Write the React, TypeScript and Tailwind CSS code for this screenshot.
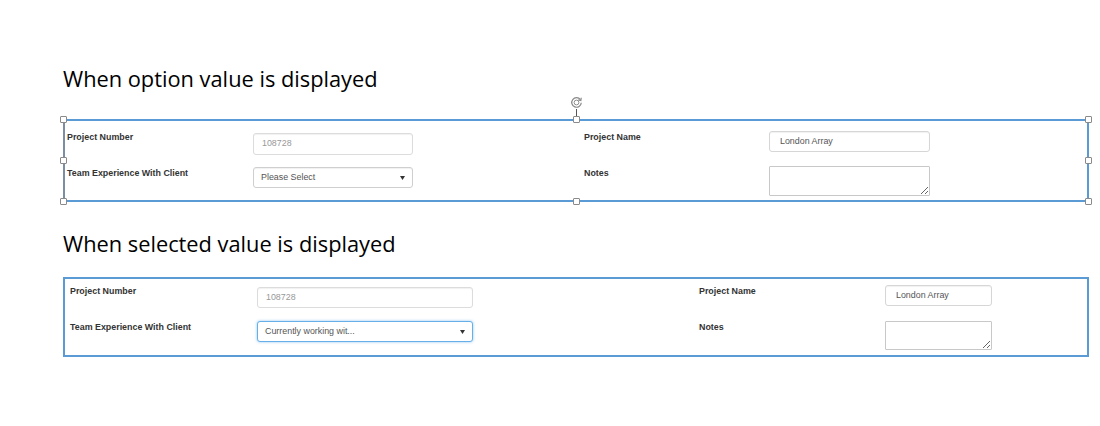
import React from "react";

const Handle = ({ className }: { className: string }) => (
  <div
    className={`absolute w-[7px] h-[7px] bg-white border border-[#8a8a8a] rounded-[1px] ${className}`}
  />
);

const Caret = () => (
  <svg width="5" height="4" viewBox="0 0 5 4" className="shrink-0">
    <path d="M0 0 L5 0 L2.5 4 Z" fill="#333" />
  </svg>
);

const labelCls =
  "text-[8.9px] leading-[12px] font-bold text-[#333] whitespace-nowrap";
const inputCls =
  "flex items-center border rounded-[3px] bg-white text-[8.9px] shadow-[inset_0_1px_1px_rgba(0,0,0,0.06)]";

export default function App() {
  return (
    <div
      className="w-[1100px] h-[426px] bg-white overflow-hidden"
      style={{ fontFamily: '"Liberation Sans", Arial, sans-serif' }}
    >
      <div className="pt-[64px] pl-[63px]">
        <h1
          className="text-[21.8px] leading-[30px] text-black"
          style={{ fontFamily: '"Open Sans", sans-serif' }}
        >
          When option value is displayed
        </h1>
      </div>

      {/* Box 1 */}
      <div className="relative ml-[63px] mt-[25px] w-[1026px] h-[83px] border-2 border-[#5b9bd5] border-l-[#7b8ea3] flex pl-[2px]">
        {/* rotate handle */}
        <div className="absolute left-[505px] -top-[25px] flex flex-col items-center">
          <svg width="13" height="13" viewBox="0 0 12 12">
            <path
              d="M9.6 3.4 A4.4 4.4 0 1 0 10.4 6.2"
              fill="none"
              stroke="#8a8a8a"
              strokeWidth="1.1"
            />
            <path d="M10.4 1.6 L10 4.2 L7.6 3.6" fill="none" stroke="#8a8a8a" strokeWidth="1.1" />
            <circle cx="6" cy="6" r="2.2" fill="none" stroke="#8a8a8a" strokeWidth="0.9" />
          </svg>
          <div className="w-px h-[9px] bg-[#555]" />
        </div>
        <Handle className="-left-[5px] -top-[5px]" />
        <Handle className="left-[508px] -top-[5px]" />
        <Handle className="-right-[5px] -top-[5px]" />
        <Handle className="-left-[5px] top-[36px]" />
        <Handle className="-right-[5px] top-[36px]" />
        <Handle className="-left-[5px] -bottom-[5px]" />
        <Handle className="left-[508px] -bottom-[5px]" />
        <Handle className="-right-[5px] -bottom-[5px]" />

        <div className="w-[186px] flex flex-col">
          <div className={`${labelCls} mt-[10px]`}>Project Number</div>
          <div className={`${labelCls} mt-[24px]`}>Team Experience With Client</div>
        </div>
        <div className="w-[160px] flex flex-col">
          <div className={`${inputCls} mt-[12px] h-[22px] border-[#dcdcdc] pl-[8px] text-[#999]`}>
            108728
          </div>
          <div className={`${inputCls} mt-[12px] h-[21px] border-[#cfcfcf] pl-[7px] pr-[7px] text-[#555] justify-between`}>
            <span>Please Select</span>
            <Caret />
          </div>
        </div>
        <div className="w-[171px]" />
        <div className="w-[185px] flex flex-col">
          <div className={`${labelCls} mt-[10px]`}>Project Name</div>
          <div className={`${labelCls} mt-[24px]`}>Notes</div>
        </div>
        <div className="w-[161px] flex flex-col">
          <div className={`${inputCls} mt-[10px] h-[21px] border-[#d6d6d6] pl-[10px] text-[#555]`}>
            London Array
          </div>
          <textarea
            readOnly
            className="mt-[14px] h-[30px] w-full border border-[#c8c8c8] bg-white rounded-[1px] resize-y block"
          />
        </div>
      </div>

      <div className="pt-[27px] pl-[63px]">
        <h1
          className="text-[21.8px] leading-[30px] text-black"
          style={{ fontFamily: '"Open Sans", sans-serif' }}
        >
          When selected value is displayed
        </h1>
      </div>

      {/* Box 2 */}
      <div className="ml-[63px] mt-[18px] w-[1026px] h-[80px] border-2 border-[#5b9bd5] flex pl-[5px]">
        <div className="w-[187px] flex flex-col">
          <div className={`${labelCls} mt-[6px]`}>Project Number</div>
          <div className={`${labelCls} mt-[24px]`}>Team Experience With Client</div>
        </div>
        <div className="w-[216px] flex flex-col">
          <div className={`${inputCls} mt-[8px] h-[21px] border-[#dcdcdc] pl-[8px] text-[#999]`}>
            108728
          </div>
          <div className="mt-[13px] h-[21px] flex items-center justify-between border border-[#66afe9] rounded-[3px] bg-white pl-[7px] pr-[7px] text-[8.9px] text-[#555] shadow-[0_0_3px_rgba(102,175,233,0.7)]">
            <span>Currently working wit...</span>
            <Caret />
          </div>
        </div>
        <div className="w-[226px]" />
        <div className="w-[186px] flex flex-col">
          <div className={`${labelCls} mt-[6px]`}>Project Name</div>
          <div className={`${labelCls} mt-[24px]`}>Notes</div>
        </div>
        <div className="w-[107px] flex flex-col">
          <div className={`${inputCls} mt-[6px] h-[21px] border-[#d6d6d6] pl-[10px] text-[#555]`}>
            London Array
          </div>
          <textarea
            readOnly
            className="mt-[15px] h-[29px] w-full border border-[#c8c8c8] bg-white rounded-[1px] resize-y block"
          />
        </div>
      </div>
    </div>
  );
}
